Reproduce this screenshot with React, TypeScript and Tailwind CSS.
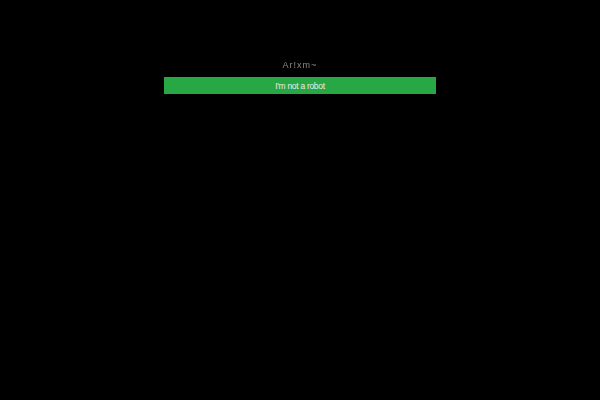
export default function App() {
  return (
    <main
      className="w-[600px] h-[400px] bg-black flex flex-col items-center pt-[58px]"
      style={{ fontFamily: '"Liberation Sans", Arial, sans-serif' }}
    >
      <div className="h-[15px] flex items-center text-[9px] tracking-[1px] text-[#8a8a8a] blur-[0.3px]">
        Ar!xm~
      </div>
      <button className="mt-[4px] w-[272px] h-[17px] bg-[#28a745] text-[#ececec] text-[8.5px] tracking-[-0.3px] leading-none flex items-center justify-center pt-[2px]">
        I&apos;m not a robot
      </button>
    </main>
  );
}
